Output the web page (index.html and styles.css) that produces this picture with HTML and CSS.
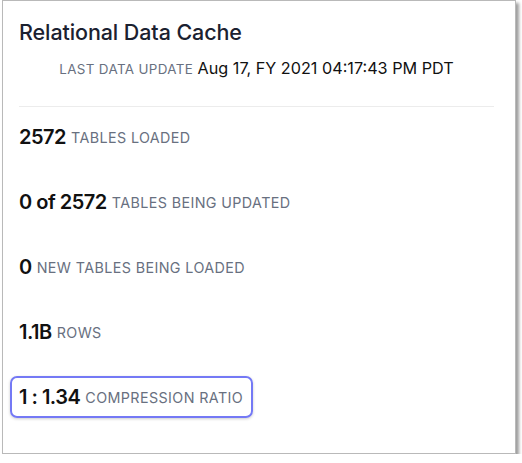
FILE: index.html
```html
<!DOCTYPE html>
<html>
<head>
<meta charset="utf-8">
<link rel="stylesheet" href="styles.css">
</head>
<body>
<div class="card">
  <header class="card-header">
    <h1 class="title">Relational Data Cache</h1>
    <p class="update"><span class="label">LAST DATA UPDATE</span> Aug 17, FY 2021 04:17:43 PM PDT</p>
  </header>
  <hr class="divider">
  <ul class="stats">
    <li class="stat"><span class="num">2572</span> <span class="label">TABLES LOADED</span></li>
    <li class="stat"><span class="num">0 of 2572</span> <span class="label">TABLES BEING UPDATED</span></li>
    <li class="stat"><span class="num">0</span> <span class="label">NEW TABLES BEING LOADED</span></li>
    <li class="stat"><span class="num">1.1B</span> <span class="label">ROWS</span></li>
    <li class="stat stat-focus"><span class="num">1 : 1.34</span> <span class="label">COMPRESSION RATIO</span></li>
  </ul>
</div>
</body>
</html>
```

FILE: styles.css
```css
* { box-sizing: border-box; }
html, body { margin: 0; padding: 0; background: #fff; }
body {
  font-family: Inter, "Liberation Sans", sans-serif;
  color: #1b2130;
}
.card {
  margin-left: 2px;
  width: 514px;
  height: 454px;
  border: 1px solid #b9b9b9;
  background: #fff;
  box-shadow: 3px 3px 3px rgba(0, 0, 0, 0.38);
  padding: 19px 21px 0 7px;
}
.card-header {
  padding-left: 9px;
}
.title {
  margin: 0;
  font-size: 21.5px;
  line-height: 24px;
  font-weight: 500;
  letter-spacing: -0.1px;
  color: #1b2130;
}
.update {
  margin: 14px 0 0;
  text-align: center;
  font-size: 16.2px;
  line-height: 20px;
  color: #111;
}
.update .label {
  font-size: 13.4px;
  letter-spacing: 0.35px;
}
.label {
  color: #687080;
  font-size: 14.3px;
  letter-spacing: 0.4px;
}
.divider {
  margin: 27px 0 0 9px;
  border: 0;
  border-top: 1px solid #ececec;
}
.stats {
  list-style: none;
  margin: 9px 0 0;
  padding: 0;
  display: flex;
  flex-direction: column;
  align-items: flex-start;
  gap: 23px;
}
.stat {
  height: 42px;
  display: flex;
  align-items: center;
  gap: 5px;
  padding: 0 8px 0 7px;
  border: 2px solid transparent;
  border-radius: 7px;
  white-space: nowrap;
}
.num {
  font-size: 20px;
  font-weight: 600;
  letter-spacing: -0.5px;
  color: #111;
}
.stat-focus {
  border-color: #7479f5;
  box-shadow: 0 1px 3px rgba(0, 0, 0, 0.2);
}
```
